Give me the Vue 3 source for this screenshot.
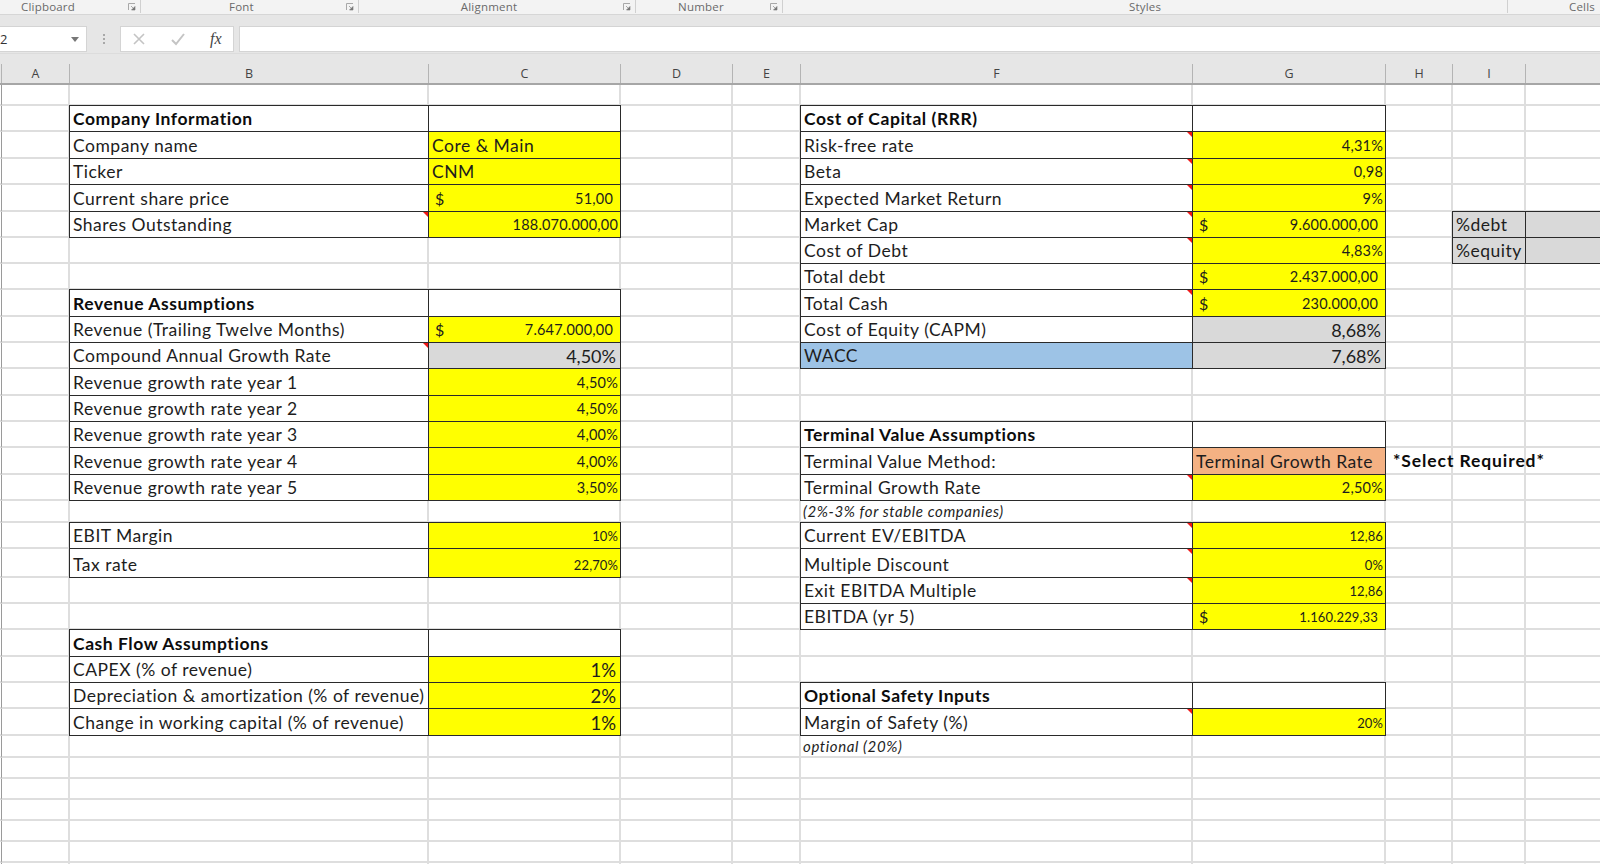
<template>
  <div class="app">
    <div class="ribbon">
      <div v-for="g in groups" :key="g.name" class="group" :style="{ width: g.width + 'px' }">
        <span class="group-name">{{ g.name }}</span>
        <svg v-if="g.launcher" class="launcher" width="8" height="8" viewBox="0 0 8 8">
          <path d="M.5 7V.5H7" fill="none" stroke="#a8a8a8" />
          <path d="M3 3l3 3M7 3.5V7H3.5z" fill="#777" stroke="#777" stroke-width=".6" />
        </svg>
      </div>
    </div>
    <div class="formula-bar">
      <div class="name-box">
        <span>2</span>
        <i class="caret"></i>
      </div>
      <div class="grip"><i></i><i></i><i></i></div>
      <div class="fx-box">
        <svg width="14" height="14" viewBox="0 0 14 14"><path d="M2 2l10 10M12 2L2 12" stroke="#c4c4c4" stroke-width="1.6" fill="none" /></svg>
        <svg width="16" height="14" viewBox="0 0 16 14"><path d="M2 8l4 4L14 2" stroke="#c4c4c4" stroke-width="2" fill="none" /></svg>
        <span class="fx">fx</span>
      </div>
      <div class="formula-input"></div>
    </div>
    <div class="col-headers">
      <div v-for="c in headers" :key="c.id + c.width" class="col-head" :style="{ width: c.width + 'px' }">{{ c.id }}</div>
    </div>
    <div class="sheet">
      <template v-for="(h, r) in rowHeights" :key="r">
        <div
          v-for="c in columns"
          :key="c + r"
          class="cell"
          :class="cellAt(c, r).cls"
        >
          <span v-if="cellAt(c, r).cur" class="cur">$</span>
          <span class="txt">{{ cellAt(c, r).t }}</span>
          <i v-if="cellAt(c, r).note" class="note"></i>
        </div>
      </template>
    </div>
  </div>
</template>

<script setup>
const groups = [
  { name: 'Clipboard', width: 141, launcher: true },
  { name: 'Font', width: 218, launcher: true },
  { name: 'Alignment', width: 277, launcher: true },
  { name: 'Number', width: 147, launcher: true },
  { name: 'Styles', width: 725 },
  { name: 'Cells', width: 92 }
]

const headers = [
  { id: '', width: 2 },
  { id: 'A', width: 68 },
  { id: 'B', width: 359 },
  { id: 'C', width: 192 },
  { id: 'D', width: 112 },
  { id: 'E', width: 68 },
  { id: 'F', width: 392 },
  { id: 'G', width: 193 },
  { id: 'H', width: 67 },
  { id: 'I', width: 73 },
  { id: '', width: 74 }
]

const columns = ['_', 'A', 'B', 'C', 'D', 'E', 'F', 'G', 'H', 'I', 'J']
const rowHeights = [21, 26, 27, 26, 27, 26, 26, 26, 27, 26, 26, 27, 26, 26, 27, 26, 22, 26, 29, 26, 26, 27, 26, 26, 27, 22, 21, 21, 21, 21, 21, 21]

const label = (t, extra = {}) => ({ t, cls: 'box', ...extra })
const head = (t) => ({ t, cls: 'box bold' })
const empty = { t: '', cls: 'box' }
const input = (t, extra = {}) => ({ t, cls: 'box yellow num', ...extra })
const money = (t, extra = {}) => ({ t, cur: true, cls: 'box yellow money', ...extra })
const big = (t) => ({ t, cls: 'box gray num big' })

// row number -> cells, same numbering as the sheet (row 1 is the blank one under the headers)
const data = {
  2: { B: head('Company Information'), C: empty, F: head('Cost of Capital (RRR)'), G: empty },
  3: { B: label('Company name'), C: { t: 'Core & Main', cls: 'box yellow' }, F: label('Risk-free rate', { note: true }), G: input('4,31%') },
  4: { B: label('Ticker'), C: { t: 'CNM', cls: 'box yellow' }, F: label('Beta', { note: true }), G: input('0,98') },
  5: { B: label('Current share price'), C: money('51,00'), F: label('Expected Market Return', { note: true }), G: input('9%') },
  6: { B: label('Shares Outstanding', { note: true }), C: input('188.070.000,00'), F: label('Market Cap', { note: true }), G: money('9.600.000,00'), I: { t: '%debt', cls: 'box gray' }, J: { t: '', cls: 'box gray' } },
  7: { F: label('Cost of Debt', { note: true }), G: input('4,83%'), I: { t: '%equity', cls: 'box gray' }, J: { t: '', cls: 'box gray' } },
  8: { F: label('Total debt'), G: money('2.437.000,00') },
  9: { B: head('Revenue Assumptions'), C: empty, F: label('Total Cash', { note: true }), G: money('230.000,00') },
  10: { B: label('Revenue (Trailing Twelve Months)'), C: money('7.647.000,00'), F: label('Cost of Equity (CAPM)'), G: big('8,68%') },
  11: { B: label('Compound Annual Growth Rate', { note: true }), C: big('4,50%'), F: { t: 'WACC', cls: 'box blue' }, G: big('7,68%') },
  12: { B: label('Revenue growth rate year 1'), C: input('4,50%') },
  13: { B: label('Revenue growth rate year 2'), C: input('4,50%') },
  14: { B: label('Revenue growth rate year 3'), C: input('4,00%'), F: head('Terminal Value Assumptions'), G: empty },
  15: { B: label('Revenue growth rate year 4'), C: input('4,00%'), F: label('Terminal Value Method:'), G: { t: 'Terminal Growth Rate', cls: 'box orange' }, H: { t: '*Select Required*', cls: 'bold overflow' } },
  16: { B: label('Revenue growth rate year 5'), C: input('3,50%'), F: label('Terminal Growth Rate', { note: true }), G: input('2,50%') },
  17: { F: { t: '(2%-3% for stable companies)', cls: 'hint' } },
  18: { B: label('EBIT Margin'), C: input('10%', { cls: 'box yellow num small' }), F: label('Current EV/EBITDA', { note: true }), G: input('12,86', { cls: 'box yellow num small' }) },
  19: { B: label('Tax rate'), C: input('22,70%', { cls: 'box yellow num small' }), F: label('Multiple Discount', { note: true }), G: input('0%', { cls: 'box yellow num small' }) },
  20: { F: label('Exit EBITDA Multiple', { note: true }), G: input('12,86', { cls: 'box yellow num small' }) },
  21: { F: label('EBITDA (yr 5)'), G: money('1.160.229,33', { cls: 'box yellow money small' }) },
  22: { B: head('Cash Flow Assumptions'), C: empty },
  23: { B: label('CAPEX (% of revenue)'), C: input('1%', { cls: 'box yellow num mid' }) },
  24: { B: label('Depreciation & amortization (% of revenue)'), C: input('2%', { cls: 'box yellow num mid' }), F: head('Optional Safety Inputs'), G: empty },
  25: { B: label('Change in working capital (% of revenue)'), C: input('1%', { cls: 'box yellow num mid' }), F: label('Margin of Safety (%)', { note: true }), G: input('20%', { cls: 'box yellow num small' }) },
  26: { F: { t: 'optional (20%)', cls: 'hint' } }
}

function cellAt(col, rowIndex) {
  const row = data[rowIndex + 1]
  const cell = row && row[col]
  if (cell) return cell
  return { t: '', cls: col === '_' ? 'edge' : '' }
}
</script>

<style scoped>
.app {
  width: 1600px;
  height: 864px;
  overflow: hidden;
  background: #fff;
  font-family: Lato, "Liberation Sans", sans-serif;
  color: #1d1d1d;
}

.ribbon {
  display: flex;
  height: 15px;
  background: #f3f3f3;
  border-bottom: 1px solid #d6d6d6;
  box-sizing: border-box;
}
.group {
  position: relative;
  flex: none;
  height: 13px;
  box-sizing: border-box;
  border-right: 1px solid #d0d0d0;
  text-align: center;
}
.group:last-child {
  border-right: 0;
}
.group-name {
  display: block;
  font-family: "Open Sans", sans-serif;
  font-size: 11.5px;
  line-height: 13px;
  letter-spacing: .2px;
  color: #6a6a6a;
}
.group:nth-child(1) .group-name { margin-right: 44px; }
.group:nth-child(2) .group-name { margin-right: 16px; }
.group:nth-child(3) .group-name { margin-right: 16px; }
.group:nth-child(4) .group-name { margin-right: 16px; }
.group:nth-child(6) .group-name { margin-left: 56px; }
.launcher {
  position: absolute;
  right: 4px;
  top: 3px;
}

.formula-bar {
  display: flex;
  align-items: stretch;
  height: 39px;
  padding: 11px 0 1px;
  box-sizing: border-box;
  background: #e6e6e6;
  border-bottom: 1px solid #dcdcdc;
}
.name-box {
  display: flex;
  align-items: center;
  justify-content: space-between;
  width: 87px;
  padding-right: 7px;
  box-sizing: border-box;
  background: #fff;
  border: 1px solid #d4d4d4;
  border-left: 0;
  font-family: "Open Sans", sans-serif;
  font-size: 13px;
  color: #333;
}
.caret {
  border-left: 4px solid transparent;
  border-right: 4px solid transparent;
  border-top: 5px solid #777;
}
.grip {
  display: flex;
  flex-direction: column;
  justify-content: center;
  gap: 2px;
  width: 33px;
  align-items: center;
}
.grip i {
  width: 2px;
  height: 2px;
  background: #a8a8a8;
}
.fx-box {
  display: flex;
  align-items: center;
  gap: 24px;
  width: 114px;
  padding-left: 11px;
  box-sizing: border-box;
  background: #fff;
  border: 1px solid #d4d4d4;
}
.fx {
  font-family: "Liberation Serif", serif;
  font-style: italic;
  font-size: 16px;
  color: #444;
}
.formula-input {
  flex: 1;
  margin-left: 5px;
  background: #fff;
  border: 1px solid #d4d4d4;
  border-right: 0;
}

.col-headers {
  display: flex;
  height: 31px;
  padding-top: 10px;
  background: #e6e6e6;
  border-bottom: 2px solid #a6a6a6;
  box-sizing: border-box;
}
.col-head {
  flex: none;
  box-sizing: border-box;
  height: 100%;
  border-right: 1px solid #b4b4b4;
  text-align: center;
  font-family: "Open Sans", sans-serif;
  font-size: 12.5px;
  line-height: 19px;
  color: #444;
}
.col-head:last-child {
  border-right: 0;
}

.sheet {
  display: grid;
  grid-template-columns: 2px 68px 359px 192px 112px 68px 392px 193px 67px 73px 80px;
  grid-template-rows: 21px 26px 27px 26px 27px 26px 26px 26px 27px 26px 26px 27px 26px 26px 27px 26px 22px 26px 29px 26px 26px 27px 26px 26px 27px 22px 21px 21px 21px 21px 21px 21px;
}
.cell {
  position: relative;
  display: flex;
  align-items: flex-end;
  min-width: 0;
  box-sizing: border-box;
  padding: 0 3px 1px 3px;
  border-right: 2px solid #dedede;
  border-bottom: 2px solid #dedede;
  font-size: 17.5px;
  line-height: 22px;
  letter-spacing: .5px;
  white-space: nowrap;
}
.edge {
  padding: 0;
  border-right: 1px solid #9a9a9a;
}
.box {
  margin: -1px 0 0 -1px;
  border: 1px solid #2a2a2a;
  z-index: 1;
}
.bold {
  font-weight: 700;
  letter-spacing: .55px;
  color: #0c0c0c;
}
.yellow {
  background: #ffff00;
}
.gray {
  background: #d9d9d9;
}
.blue {
  background: #9dc3e6;
}
.orange {
  background: #f4b183;
}
.num {
  justify-content: flex-end;
  padding-right: 2px;
  font-size: 14.5px;
  letter-spacing: .2px;
}
.num.big {
  font-size: 18px;
  letter-spacing: 0;
  padding-right: 4px;
}
.num.mid {
  font-size: 18.5px;
  letter-spacing: 0;
  padding-right: 4px;
}
.small {
  font-size: 13px;
  letter-spacing: .1px;
}
.money {
  justify-content: space-between;
  padding: 0 7px 1px 6px;
  font-size: 14.5px;
  letter-spacing: .2px;
}
.money.small {
  font-size: 13px;
  letter-spacing: .15px;
}
.cur {
  font-size: 16px;
}
.hint {
  font-style: italic;
  font-size: 15px;
  line-height: 20px;
  letter-spacing: .6px;
  padding: 0 0 0 2px;
}
.overflow {
  padding-left: 7px;
  letter-spacing: .9px;
  overflow: visible;
  z-index: 2;
}
.note {
  position: absolute;
  top: 0;
  right: -1px;
  border-top: 6px solid #f01818;
  border-left: 6px solid transparent;
}
</style>
